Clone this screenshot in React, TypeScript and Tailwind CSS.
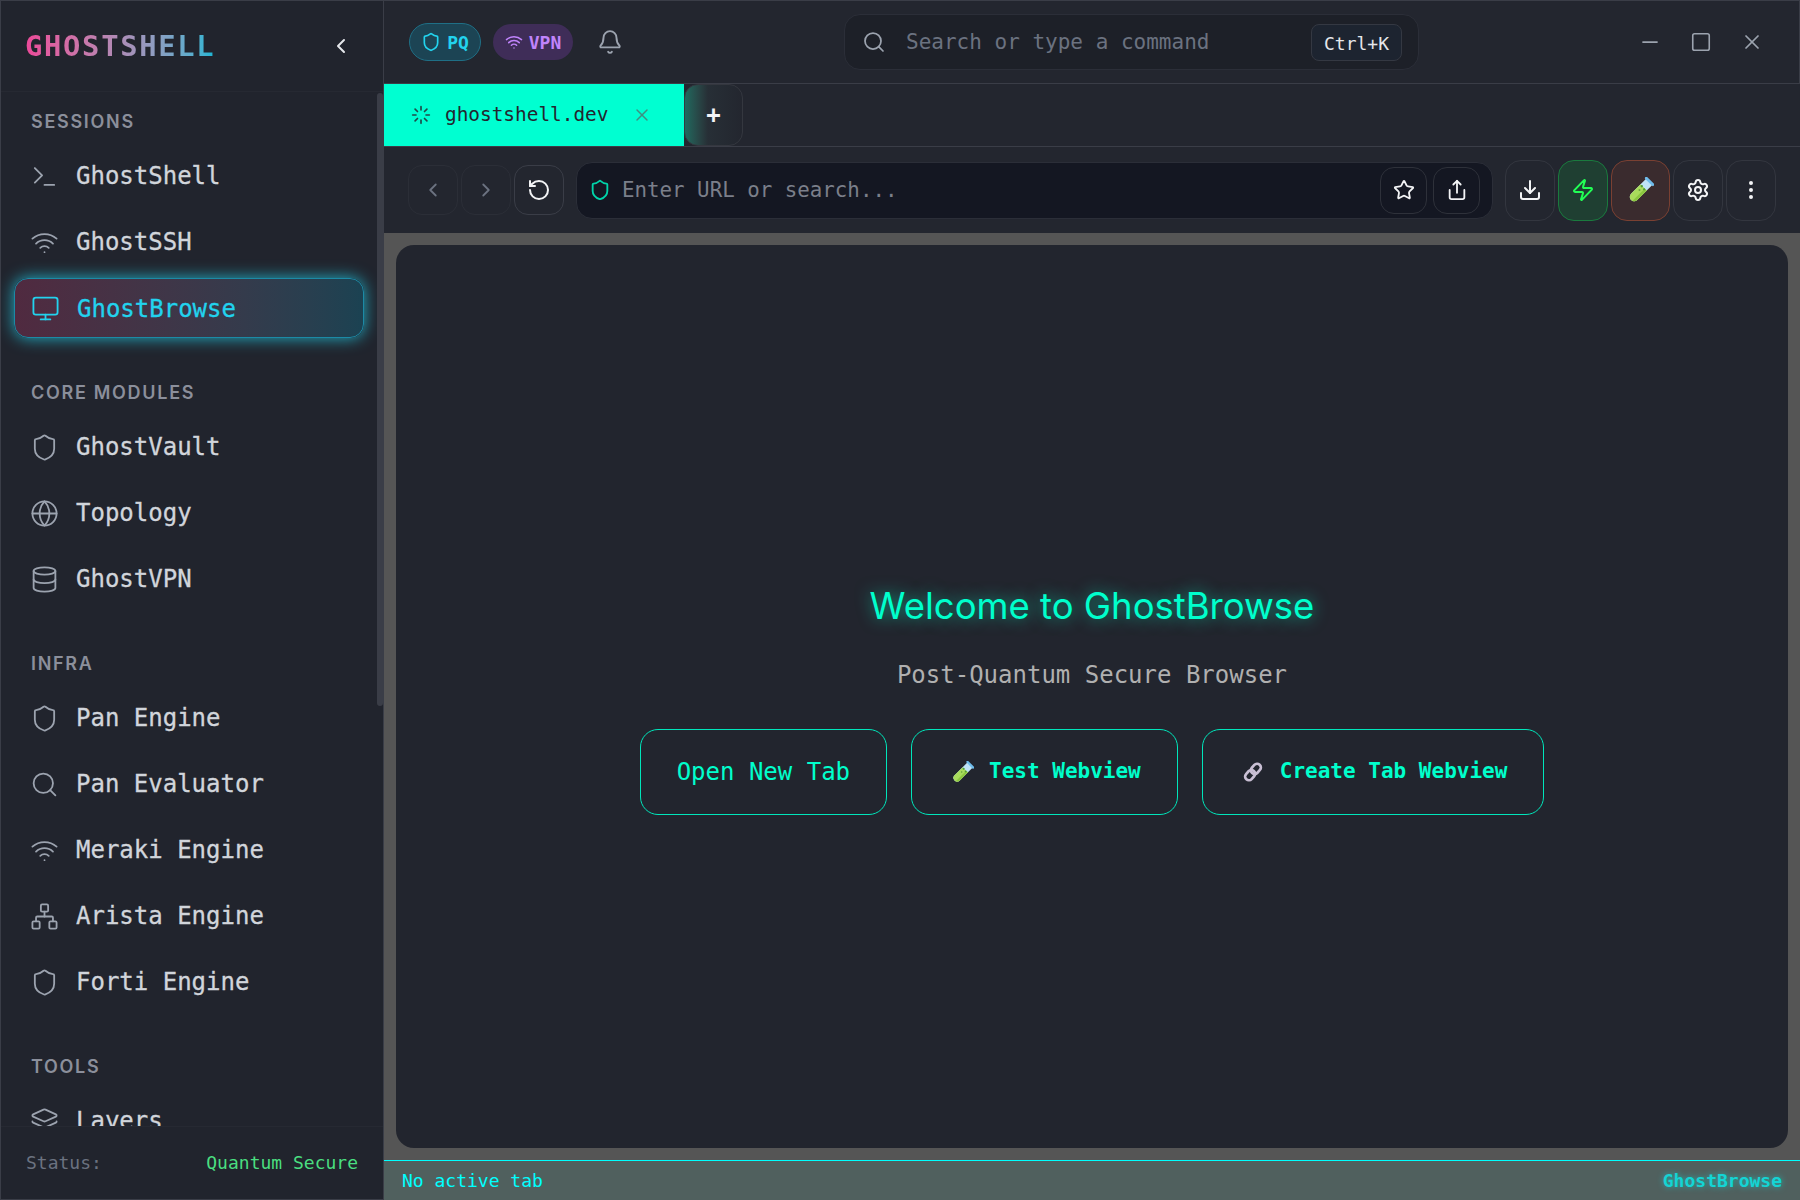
import {
  Bell,
  ChevronLeft,
  ChevronRight,
  Database,
  Download,
  EllipsisVertical,
  Globe,
  Layers,
  Loader,
  Minus,
  Monitor,
  Network,
  RotateCcw,
  Search,
  Settings,
  Share,
  Shield,
  Square,
  Star,
  Terminal,
  Wifi,
  X,
  Zap,
} from 'lucide-react';
import type { ComponentType } from 'react';

type IconType = ComponentType<{ className?: string; strokeWidth?: number }>;

interface NavItem {
  label: string;
  icon: IconType;
  active?: boolean;
}

const sections: { title: string; items: NavItem[] }[] = [
  {
    title: 'SESSIONS',
    items: [
      { label: 'GhostShell', icon: Terminal },
      { label: 'GhostSSH', icon: Wifi },
      { label: 'GhostBrowse', icon: Monitor, active: true },
    ],
  },
  {
    title: 'CORE MODULES',
    items: [
      { label: 'GhostVault', icon: Shield },
      { label: 'Topology', icon: Globe },
      { label: 'GhostVPN', icon: Database },
    ],
  },
  {
    title: 'INFRA',
    items: [
      { label: 'Pan Engine', icon: Shield },
      { label: 'Pan Evaluator', icon: Search },
      { label: 'Meraki Engine', icon: Wifi },
      { label: 'Arista Engine', icon: Network },
      { label: 'Forti Engine', icon: Shield },
    ],
  },
  {
    title: 'TOOLS',
    items: [{ label: 'Layers', icon: Layers }],
  },
];

function TestTube({ className }: { className?: string }): JSX.Element {
  return (
    <svg className={className} viewBox="0 0 24 24">
      <g transform="rotate(45 12 12)">
        <path d="M8 1h8v20a4 4 0 0 1-8 0z" fill="#bfe3f7" />
        <path d="M8 8.5h8V21a4 4 0 0 1-8 0z" fill="#a9dc5c" />
        <path d="M13.5 8.5H16V21a4 4 0 0 1-2.5 3.7z" fill="#8cc63f" />
        <rect x="6.5" y="-0.5" width="11" height="2.5" rx="1" fill="#6fbcec" />
        <circle cx="10" cy="9" r="1.1" fill="#4e9a3c" />
        <circle cx="13.5" cy="9.5" r="1" fill="#4e9a3c" />
        <circle cx="11" cy="13" r="0.9" fill="#6aa83f" />
      </g>
    </svg>
  );
}

function LinkGlyph({ className }: { className?: string }): JSX.Element {
  return (
    <svg className={className} viewBox="0 0 24 24" fill="none" stroke="#c9bfd4" strokeWidth={3.2}>
      <rect x="11" y="1.5" width="9" height="13.5" rx="4.5" transform="rotate(42 15.5 8.2)" />
      <rect x="4" y="9" width="9" height="13.5" rx="4.5" transform="rotate(42 8.5 15.8)" />
    </svg>
  );
}

function Sidebar(): JSX.Element {
  return (
    <aside className="relative flex h-full w-[383px] shrink-0 flex-col border-r border-b border-[#3a3d47] bg-[#21242d]">
      <div className="flex h-[91px] shrink-0 items-center justify-between border-b border-[#262932] pl-[24px] pr-[30px]">
        <span className="bg-gradient-to-r from-[#ec4899] to-[#06b6d4] bg-clip-text pt-[2px] text-[28.8px] font-bold tracking-[1.7px] text-transparent">
          GHOSTSHELL
        </span>
        <ChevronLeft className="h-6 w-6 text-[#e5e7eb]" strokeWidth={2} />
      </div>

      <nav className="min-h-0 flex-1 overflow-hidden pr-[19px] pl-[13px] pt-[16px]">
        {sections.map((section) => (
          <div key={section.title} className="mb-[41px]">
            <div className="mb-[11px] pl-[17px] font-['Inter',sans-serif] text-[18px] leading-[27px] font-semibold tracking-[1.7px] text-[#8b8f9b]">
              {section.title}
            </div>
            <div className="flex flex-col gap-[6px]">
              {section.items.map((item) => {
                const Icon = item.icon;
                return (
                  <div
                    key={item.label}
                    className={
                      item.active
                        ? 'flex h-[60px] items-center gap-[17px] rounded-[14px] border border-[#1c8aa6] bg-gradient-to-r from-[#502a40] to-[#1b4252] px-[16px] pt-[1px] text-[24px] text-[#22d3ee] shadow-[0_0_16px_rgba(34,211,238,0.8)]'
                        : 'flex h-[60px] items-center gap-[17px] px-[16px] text-[24px] text-[#d1d5db]'
                    }
                  >
                    <Icon
                      className={item.active ? 'h-[29px] w-[29px] shrink-0' : 'h-[29px] w-[29px] shrink-0 text-[#9ca3af]'}
                      strokeWidth={1.5}
                    />
                    <span className="[-webkit-text-stroke:0.3px]">{item.label}</span>
                  </div>
                );
              })}
            </div>
          </div>
        ))}
      </nav>

      <div className="flex h-[73px] shrink-0 items-center justify-between border-t border-[#262932] bg-[#21242d] px-[25px] pb-[2px] text-[18px]">
        <span className="text-[#6b7280]">Status:</span>
        <span className="text-[#4ade80]">Quantum Secure</span>
      </div>

      {/* scrollbar thumb */}
      <div className="absolute top-[92px] right-0 h-[613px] w-[6px] rounded-full bg-[#3a3d47]" />
    </aside>
  );
}

function TitleBar(): JSX.Element {
  return (
    <header className="flex h-[83px] shrink-0 items-center border-r border-b border-[#3a3d47] bg-[#23262f]">
      <div className="ml-[25px] flex h-[38px] w-[72px] items-center justify-center gap-[6px] rounded-full border border-[#1f6f86] bg-[#1c4454] text-[18px] font-bold text-[#22d3ee]">
        <Shield className="h-[20px] w-[20px]" strokeWidth={2} />
        PQ
      </div>
      <div className="ml-[12px] flex h-[36px] w-[80px] items-center justify-center gap-[6px] rounded-full bg-[#3f2d58] text-[18px] font-bold text-[#c084fc]">
        <Wifi className="h-[18px] w-[18px]" strokeWidth={2} />
        VPN
      </div>
      <Bell className="ml-[24px] h-[26px] w-[26px] text-[#9ca3af]" strokeWidth={1.75} />

      <div className="ml-[221px] flex h-[56px] w-[575px] items-center rounded-[16px] border border-[#2b2e38] bg-[#1d2028] pl-[17px] pr-[16px]">
        <Search className="h-6 w-6 shrink-0 text-[#9ca3af]" strokeWidth={1.75} />
        <span className="ml-[20px] flex-1 pt-[2px] text-[21px] text-[#6b7280]">Search or type a command</span>
        <span className="flex h-[37px] w-[91px] items-center justify-center rounded-[8px] border border-[#343842] bg-[#1d2430] pt-[2px] text-[18px] text-[#e5e7eb]">
          Ctrl+K
        </span>
      </div>

      <div className="ml-auto flex items-center gap-[28px] pr-[35px] text-[#9ca3af]">
        <Minus className="h-6 w-6" strokeWidth={1.75} />
        <Square className="h-[22px] w-[22px]" strokeWidth={1.75} />
        <X className="h-6 w-6" strokeWidth={1.75} />
      </div>
    </header>
  );
}

function TabBar(): JSX.Element {
  return (
    <div className="flex h-[63px] shrink-0 items-stretch border-b border-[#3a3d47] bg-[#23262f]">
      <div className="flex w-[300px] items-center bg-[#00ffd1] pl-[27px] text-[19.4px] text-[#23262f]">
        <Loader className="h-[20px] w-[20px] text-[#1f4a48]" strokeWidth={2} />
        <span className="ml-[14px]">ghostshell.dev</span>
        <X className="ml-[24px] h-[20px] w-[20px] text-[#3f8f80]" strokeWidth={1.75} />
      </div>
      <div className="flex w-[59px] items-center justify-center rounded-[14px] border border-[#34373f] bg-gradient-to-r from-[#1c6a5f] via-[#272f36] via-40% to-[#23262f] text-[24px] font-bold text-[#f3f4f6]">
        +
      </div>
    </div>
  );
}

function Toolbar(): JSX.Element {
  const iconBtn = 'flex h-[61px] w-[50px] items-center justify-center rounded-[16px] border border-[#33363f] text-[#f3f4f6]';
  return (
    <div className="flex h-[86px] shrink-0 items-center bg-[#23262f] pl-[24px]">
      <div className="flex gap-[3px]">
        <div className="flex h-[50px] w-[50px] items-center justify-center rounded-[14px] border border-[#2b2e37] text-[#6b7280]">
          <ChevronLeft className="h-[22px] w-[22px]" strokeWidth={2} />
        </div>
        <div className="flex h-[50px] w-[50px] items-center justify-center rounded-[14px] border border-[#2b2e37] text-[#6b7280]">
          <ChevronRight className="h-[22px] w-[22px]" strokeWidth={2} />
        </div>
        <div className="flex h-[50px] w-[50px] items-center justify-center rounded-[14px] border border-[#3a3d47] text-[#f3f4f6]">
          <RotateCcw className="h-6 w-6" strokeWidth={2} />
        </div>
      </div>

      <div className="ml-[12px] flex h-[57px] w-[917px] items-center rounded-[16px] border border-[#2b2e38] bg-[#141722] pl-[12px] pr-[12px]">
        <Shield className="h-[22px] w-[22px] shrink-0 text-[#00d4aa]" strokeWidth={2} />
        <span className="ml-[11px] flex-1 pt-[2px] text-[20.8px] text-[#7b7f8a]">Enter URL or search...</span>
        <div className="flex gap-[6px] text-[#f3f4f6]">
          <div className="flex h-[47px] w-[47px] items-center justify-center rounded-[14px] border border-[#2e313a]">
            <Star className="h-[22px] w-[22px]" strokeWidth={2} />
          </div>
          <div className="flex h-[47px] w-[47px] items-center justify-center rounded-[14px] border border-[#2e313a]">
            <Share className="h-[22px] w-[22px]" strokeWidth={2} />
          </div>
        </div>
      </div>

      <div className="ml-[12px] flex gap-[3px]">
        <div className={iconBtn}>
          <Download className="h-6 w-6" strokeWidth={2} />
        </div>
        <div className="flex h-[61px] w-[50px] items-center justify-center rounded-[16px] border border-[#1a7a3e] bg-[#1f3f32] text-[#22ff55]">
          <Zap className="h-6 w-6" strokeWidth={2} />
        </div>
        <div className="flex h-[61px] w-[59px] items-center justify-center rounded-[16px] border border-[#7a4032] bg-[#3a2b2e]">
          <TestTube className="h-[26px] w-[26px]" />
        </div>
        <div className={iconBtn}>
          <Settings className="h-6 w-6" strokeWidth={2} />
        </div>
        <div className={iconBtn}>
          <EllipsisVertical className="h-6 w-6" strokeWidth={2} />
        </div>
      </div>
    </div>
  );
}

function Welcome(): JSX.Element {
  return (
    <main className="min-h-0 flex-1 bg-[#555555] p-[12px]">
      <div className="flex h-full flex-col items-center justify-center rounded-[18px] bg-[#22252e]">
        <h1 className="font-['Inter',sans-serif] text-[36.5px] leading-[54px] font-normal text-[#00ffcc] [text-shadow:0_0_16px_rgba(0,255,204,0.6)]">
          Welcome to GhostBrowse
        </h1>
        <p className="mt-[24px] text-[24px] leading-[36px] text-[#b0b0b0]">Post-Quantum Secure Browser</p>
        <div className="mt-[36px] flex gap-[24px] text-[#00ffcc]">
          <button className="h-[86px] rounded-[18px] border border-[#00e6bb] px-[36px] text-[24px]">
            Open New Tab
          </button>
          <button className="flex h-[86px] items-center rounded-[18px] border border-[#00e6bb] px-[36px] text-[21px] font-bold">
            <TestTube className="ml-[4px] mr-[15px] h-[22px] w-[22px]" />
            Test Webview
          </button>
          <button className="flex h-[86px] items-center rounded-[18px] border border-[#00e6bb] px-[36px] text-[21px] font-bold">
            <LinkGlyph className="ml-[4px] mr-[17px] h-[20px] w-[20px]" />
            Create Tab Webview
          </button>
        </div>
      </div>
    </main>
  );
}

export default function App(): JSX.Element {
  return (
    <div className="flex h-[1200px] w-full overflow-hidden border-t border-l border-[#3a3d47] bg-[#23262f] font-['DejaVu_Sans_Mono',monospace]">
      <Sidebar />
      <div className="flex min-w-0 flex-1 flex-col">
        <TitleBar />
        <TabBar />
        <Toolbar />
        <Welcome />
        <footer className="flex h-[40px] shrink-0 items-center justify-between border-t border-[#00ffff] bg-[#50605e] pr-[18px] pl-[18px] text-[18px]">
          <span className="text-[#00ffff]">No active tab</span>
          <span className="font-bold text-[#14d4d4] [text-shadow:0_0_6px_rgba(0,255,255,0.5)]">GhostBrowse</span>
        </footer>
      </div>
    </div>
  );
}
